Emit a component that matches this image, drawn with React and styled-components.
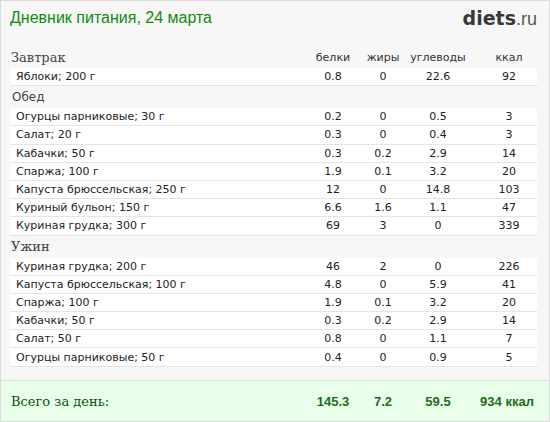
import styled, { createGlobalStyle } from 'styled-components'

const Global = createGlobalStyle`
html, body {
  margin: 0;
  padding: 0;
  background: #fff;
}
`

const Card = styled.div`
width: 550px;
height: 422px;
box-sizing: border-box;
border: 1px solid #dcdcdc;
background: #f7f7f7;
display: flex;
flex-direction: column;
font-family: "DejaVu Sans", Verdana, sans-serif;
color: #222;
`

const Top = styled.div`
display: flex;
justify-content: space-between;
align-items: center;
height: 34px;
padding: 0 12px 0 9px;
`

const Title = styled.h1`
margin: 0;
font-family: "Liberation Sans", Arial, sans-serif;
font-weight: normal;
font-size: 16px;
color: #108a10;
`

const Logo = styled.div`
font-size: 19px;
color: #333;
b {
  font-weight: bold;
  color: #383838;
}
span {
  font-family: "Liberation Sans", Arial, sans-serif;
  color: #555;
  font-size: 18px;
}
`

const Body = styled.div`
flex: 1;
padding: 11px 12px 0 9px;
`

const Grid = styled.div`
display: grid;
grid-template-columns: 1fr 52px 48px 62px 68px;
align-items: center;
`

const Head = styled(Grid)`
height: 22px;
font-size: 11px;
color: #333;
`

const Meal = styled.div`
font-family: ${p => (p.$sans ? '"DejaVu Sans", Verdana, sans-serif' : '"DejaVu Serif", Georgia, serif')};
font-size: ${p => (p.$sans ? '12px' : '13px')};
color: #444;
padding-left: ${p => (p.$sans ? '2px' : '1px')};
`

const Row = styled(Grid)`
height: 17.2px;
background: #fff;
border-bottom: 1px solid #e4e4e4;
font-size: 11px;
`

const Cell = styled.div`
text-align: ${p => (p.$name ? 'left' : 'center')};
padding-left: ${p => (p.$name ? '6px' : p.$kcal ? '12px' : '0')};
white-space: nowrap;
`

const Total = styled(Grid)`
height: 40px;
margin-top: auto;
background: #eaffea;
border-top: 1px solid #dcdcdc;
padding: 0 12px 0 9px;
`

const TotalLabel = styled.div`
font-family: "DejaVu Serif", Georgia, serif;
font-size: 13px;
color: #0a520a;
padding-left: 1px;
`

const TotalNum = styled.div`
font-family: "Liberation Sans", Arial, sans-serif;
font-weight: bold;
font-size: 13px;
color: #1d6b1d;
text-align: center;
padding-left: ${p => (p.$kcal ? '8px' : '0')};
white-space: nowrap;
`

const meals = [
  {
    name: 'Завтрак',
    items: [['Яблоки; 200 г', '0.8', '0', '22.6', '92']],
  },
  {
    name: 'Обед',
    sans: true,
    items: [
      ['Огурцы парниковые; 30 г', '0.2', '0', '0.5', '3'],
      ['Салат; 20 г', '0.3', '0', '0.4', '3'],
      ['Кабачки; 50 г', '0.3', '0.2', '2.9', '14'],
      ['Спаржа; 100 г', '1.9', '0.1', '3.2', '20'],
      ['Капуста брюссельская; 250 г', '12', '0', '14.8', '103'],
      ['Куриный бульон; 150 г', '6.6', '1.6', '1.1', '47'],
      ['Куриная грудка; 300 г', '69', '3', '0', '339'],
    ],
  },
  {
    name: 'Ужин',
    items: [
      ['Куриная грудка; 200 г', '46', '2', '0', '226'],
      ['Капуста брюссельская; 100 г', '4.8', '0', '5.9', '41'],
      ['Спаржа; 100 г', '1.9', '0.1', '3.2', '20'],
      ['Кабачки; 50 г', '0.3', '0.2', '2.9', '14'],
      ['Салат; 50 г', '0.8', '0', '1.1', '7'],
      ['Огурцы парниковые; 50 г', '0.4', '0', '0.9', '5'],
    ],
  },
]

export default function App() {
  return (
    <>
      <Global />
      <Card>
        <Top>
          <Title>Дневник питания, 24 марта</Title>
          <Logo><b>diets</b><span>.ru</span></Logo>
        </Top>
        <Body>
          {meals.map((meal, i) => (
            <div key={meal.name}>
              <Head>
                <Meal $sans={meal.sans}>{meal.name}</Meal>
                {i === 0 && (
                  <>
                    <Cell>белки</Cell>
                    <Cell>жиры</Cell>
                    <Cell>углеводы</Cell>
                    <Cell $kcal>ккал</Cell>
                  </>
                )}
              </Head>
              {meal.items.map(([name, p, f, c, k], j) => (
                <Row key={j}>
                  <Cell $name>{name}</Cell>
                  <Cell>{p}</Cell>
                  <Cell>{f}</Cell>
                  <Cell>{c}</Cell>
                  <Cell $kcal>{k}</Cell>
                </Row>
              ))}
            </div>
          ))}
        </Body>
        <Total>
          <TotalLabel>Всего за день:</TotalLabel>
          <TotalNum>145.3</TotalNum>
          <TotalNum>7.2</TotalNum>
          <TotalNum>59.5</TotalNum>
          <TotalNum $kcal>934 ккал</TotalNum>
        </Total>
      </Card>
    </>
  )
}
